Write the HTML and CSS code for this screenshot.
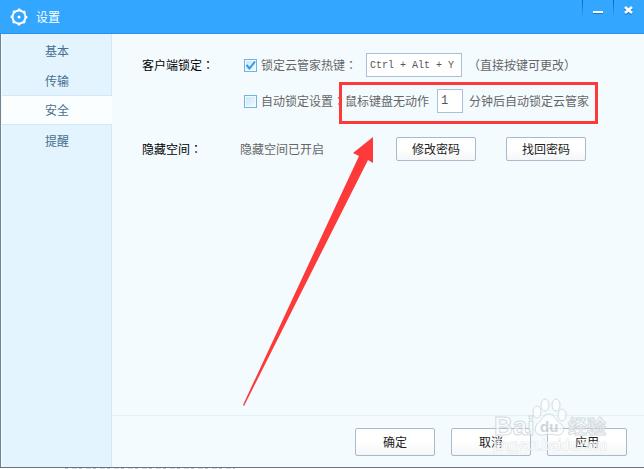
FILE: index.html
```html
<!DOCTYPE html>
<html lang="zh-CN">
<head>
<meta charset="utf-8">
<title>设置</title>
<link rel="stylesheet" href="styles.css">
</head>
<body>
<div class="window">
  <header class="titlebar">
    <svg class="gear" viewBox="0 0 18 18" aria-hidden="true">
      <circle cx="9" cy="9" r="6.5" fill="none" stroke="#fff" stroke-width="2"/>
      <circle cx="9" cy="9" r="7.4" fill="none" stroke="#fff" stroke-width="2" stroke-dasharray="2.6 3.21" stroke-dashoffset="1.3"/>
      <circle cx="9" cy="9" r="1.5" fill="#fff"/>
    </svg>
    <h1 class="title">设置</h1>
    <div class="window-buttons">
      <button class="window-button" type="button" aria-label="最小化">
        <svg viewBox="0 0 12 12" aria-hidden="true"><path d="M1 8h10v1H1z" fill="#1d78c8"/><path d="M1 6h10v2H1z" fill="#fff"/></svg>
      </button>
      <button class="window-button" type="button" aria-label="关闭">
        <svg viewBox="0 0 12 12" aria-hidden="true"><path d="M2 3l7 6M9 3l-7 6" stroke="#1d78c8" stroke-width="3"/><path d="M2 2l7 6M9 2l-7 6" stroke="#fff" stroke-width="2.6"/></svg>
      </button>
    </div>
  </header>
  <div class="body">
    <nav class="sidebar">
      <a class="tab" href="#basic">基本</a>
      <a class="tab" href="#transfer">传输</a>
      <a class="tab active" href="#security">安全</a>
      <a class="tab" href="#remind">提醒</a>
    </nav>
    <main class="main">
      <form class="settings">
        <div class="row">
          <span class="name">客户端锁定<span class="colon" lang="zh-TW">：</span></span>
          <label class="check">
            <input class="box" type="checkbox" checked>
            <svg class="tick" viewBox="0 0 13 13" aria-hidden="true"><path d="M2.5 6L5.5 9.5L11 2.5" fill="none" stroke="#2e9ae0" stroke-width="2"/></svg>
            锁定云管家热键<span class="colon" lang="zh-TW">：</span>
          </label>
          <input class="field hotkey" type="text" value="Ctrl + Alt + Y" aria-label="热键">
          <span class="hint">（直接按键可更改）</span>
        </div>
        <div class="row">
          <span class="name"></span>
          <label class="check">
            <input class="box" type="checkbox">
            自动锁定设置<span class="colon" lang="zh-TW">：</span>
          </label>
          <label class="idle" for="minutes">鼠标键盘无动作</label>
          <input class="field minutes" id="minutes" type="text" value="1">
          <span class="after">分钟后自动锁定云管家</span>
        </div>
        <div class="row space-row">
          <span class="name">隐藏空间<span class="colon" lang="zh-TW">：</span></span>
          <span class="status">隐藏空间已开启</span>
          <div class="actions">
            <button class="button" type="button">修改密码</button>
            <button class="button" type="button">找回密码</button>
          </div>
        </div>
      </form>
      <footer class="footer">
        <button class="button large" type="button">确定</button>
        <button class="button large" type="button">取消</button>
        <button class="button large" type="button">应用</button>
      </footer>
    </main>
  </div>
  <svg class="callout" viewBox="0 0 360 330" aria-hidden="true">
    <path d="M99 2H358V44H99ZM102 5V41H355V5Z" fill="#fd3939" fill-rule="evenodd"/>
    <path d="M133 57V83L128 80L4 326L3 325L119 76L113 73Z" fill="#fd3939"/>
  </svg>
  <svg class="watermark" viewBox="0 0 120 60" aria-hidden="true">
    <g fill="#fff" fill-opacity=".8" stroke="#ccd4d9" stroke-width="1">
      <ellipse cx="45" cy="16" rx="4" ry="6"/>
      <ellipse cx="53" cy="9" rx="4" ry="6"/>
      <ellipse cx="64" cy="9" rx="4" ry="6"/>
      <ellipse cx="70" cy="19" rx="4" ry="6"/>
      <path d="M57 18C63 18 64 25 69 28C75 34 70 40 64 39C59 38 55 38 51 39C44 40 41 34 45 28C50 25 51 18 57 18Z"/>
      <text class="brand" x="2" y="39">Bai</text>
      <text class="brand-cn" x="76" y="38">经验</text>
    </g>
    <text class="paw-text" x="48" y="36">du</text>
    <text class="site" x="2" y="54">jingyan.baidu.com</text>
  </svg>
</div>
<div class="page-edge"></div>
</body>
</html>
```
FILE: styles.css
```css
* {
  box-sizing: border-box;
}

body {
  display: flex;
  flex-direction: column;
  min-height: 100vh;
  margin: 0;
  background: #fff;
  color: #666;
  font: 12px/18px "Noto Sans CJK SC", sans-serif;
}

button,
input {
  margin: 0;
  padding: 0;
  font: inherit;
}

.window {
  position: relative;
  display: flex;
  flex: 1;
  flex-direction: column;
  border-bottom: 1px solid #66757f;
  background: #f3fbff;
}

.titlebar {
  display: flex;
  align-items: center;
  height: 34px;
  padding-left: 10px;
  border-bottom: 1px solid #2893ed;
  background: #33a7ff;
  color: #fff;
}

.gear {
  width: 18px;
  height: 18px;
}

.title {
  margin: 0 0 0 8px;
  font-size: 12px;
  font-weight: 400;
}

.window-buttons {
  display: flex;
  align-self: flex-start;
  margin-left: auto;
}

.window-button {
  display: flex;
  align-items: center;
  justify-content: center;
  width: 31px;
  height: 17px;
  border: 0;
  border-left: 1px solid;
  border-image: linear-gradient(#0b62ba, #33a7ff) 1;
  background: none;
}

.window-button svg {
  width: 12px;
  height: 12px;
  margin-top: 4px;
}

.body {
  display: flex;
  flex: 1;
  border-left: 1px solid #70838f;
}

.sidebar {
  display: flex;
  flex-direction: column;
  width: 111px;
  padding-top: 1px;
  border-left: 1px solid #f3fbff;
  background: linear-gradient(#d0e8fb, #d0e8fb) right / 1px 100% no-repeat #e3f4ff;
}

.tab {
  height: 30px;
  color: #486f8e;
  line-height: 32px;
  text-align: center;
  text-decoration: none;
}

.active {
  border: solid #d0e8fb;
  border-width: 1px 0;
  background: #fafeff;
  line-height: 28px;
}

.main {
  display: flex;
  flex: 1;
  flex-direction: column;
}

.settings {
  flex: 1;
  padding: 19px 0 0 30px;
}

.row {
  display: flex;
  align-items: center;
  height: 24px;
  margin-bottom: 12px;
  white-space: nowrap;
}

.space-row {
  margin-top: 24px;
}

.name {
  width: 98px;
  color: #000;
}

.colon {
  font-family: "Noto Sans CJK TC", sans-serif;
}

.check {
  position: relative;
  display: flex;
  align-items: center;
  padding-left: 4px;
}

.box {
  width: 13px;
  height: 13px;
  margin-right: 4px;
  border: 1px solid #73b4dd;
  background: linear-gradient(135deg, #c9e7f6, #eefaff);
  box-shadow: inset 0 0 0 1px #f3fbff;
  appearance: none;
}

.tick {
  position: absolute;
  left: 4px;
  width: 13px;
  height: 13px;
  pointer-events: none;
}

.field {
  height: 24px;
  border: 1px solid #a9c0d9;
  background: #fff;
  color: #555;
  font: 12px/18px "Liberation Mono", monospace;
}

.hotkey {
  width: 96px;
  margin: 0 6px 0 9px;
  padding-left: 3px;
  font-size: 10px;
}

.minutes {
  width: 26px;
  margin: 0 6px 0 8px;
  padding-left: 3px;
}

.actions {
  display: flex;
  gap: 30px;
  margin-left: 72px;
}

.button {
  width: 80px;
  height: 24px;
  border: 1px solid #a9bacd;
  border-radius: 2px;
  background: linear-gradient(#fff 50%, #f5f6f8);
  color: #222;
}

.large {
  height: 28px;
}

.footer {
  display: flex;
  justify-content: flex-end;
  gap: 16px;
  padding: 12px 17px 11px 0;
  border-top: 1px solid #e6f1f7;
}

.callout {
  position: absolute;
  top: 80px;
  left: 240px;
  width: 360px;
  height: 330px;
  pointer-events: none;
}

.watermark {
  position: absolute;
  right: 32px;
  bottom: 11px;
  width: 120px;
  height: 60px;
  opacity: .8;
  pointer-events: none;
}

.brand {
  font: bold 26px "Liberation Sans", sans-serif;
}

.brand-cn {
  font: bold 19px "Noto Sans CJK SC", sans-serif;
}

.paw-text {
  fill: #c5cdd2;
  font: bold 15px "Liberation Sans", sans-serif;
}

.site {
  fill: #fff;
  stroke: #d9e0e4;
  stroke-width: 1px;
  paint-order: stroke;
  font: 14px "Liberation Sans", sans-serif;
}

.page-edge {
  height: 1px;
  background: repeating-linear-gradient(90deg, #c3c7cd 0 3px, #fff 3px 7px, #d9dce1 7px 12px, #fff 12px 14px) 65px 0 / 170px 1px no-repeat;
}
```
